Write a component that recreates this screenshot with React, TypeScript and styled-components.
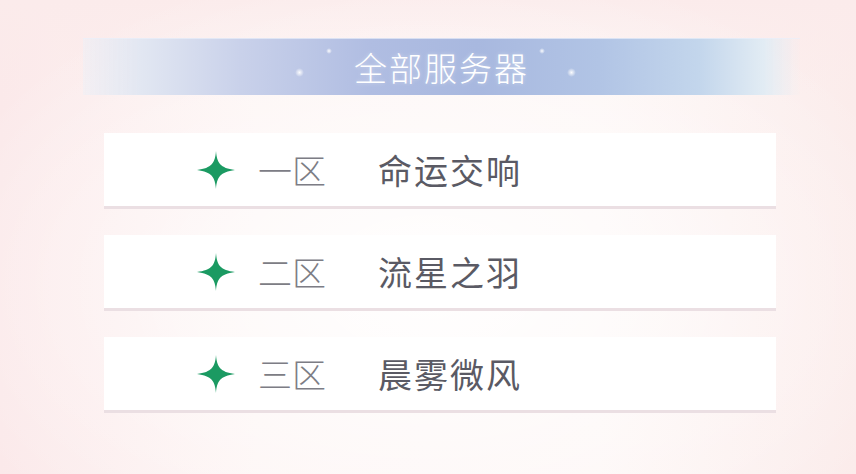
import styled, { createGlobalStyle } from 'styled-components';

const servers = [
  { zone: '一区', name: '命运交响' },
  { zone: '二区', name: '流星之羽' },
  { zone: '三区', name: '晨雾微风' },
];

const GlobalStyle = createGlobalStyle`
  html, body {
    margin: 0;
    padding: 0;
  }
  body {
    font-family: "Noto Sans CJK SC", "Noto Sans", sans-serif;
  }
`;

const Page = styled.div`
  width: 856px;
  height: 474px;
  overflow: hidden;
  box-sizing: border-box;
  padding: 38px 56px 0 83px;
  background:
    radial-gradient(ellipse 60% 70% at 50% 60%, rgba(255, 255, 255, 0.95), rgba(255, 255, 255, 0) 100%),
    linear-gradient(180deg, #fbebeb 0%, rgba(251, 235, 235, 0) 20%),
    linear-gradient(90deg, #fbe9ea 0%, #fdf4f3 30%, #fdf6f5 70%, #fbeceb 100%);
  display: flex;
  flex-direction: column;
`;

const Banner = styled.div`
  position: relative;
  width: 717px;
  height: 56px;
  display: flex;
  align-items: center;
  justify-content: center;
  background: linear-gradient(
    90deg,
    rgba(236, 240, 247, 0.5) 0%,
    #e2e7f2 8%,
    #c9d1ea 22%,
    #b0bde2 40%,
    #a8b8df 55%,
    #b1c4e5 72%,
    #c3d6ec 86%,
    #e2ecf4 95%,
    rgba(240, 244, 248, 0) 100%
  );
  border-top: 1px solid rgba(235, 240, 250, 0.7);
`;

const Title = styled.h1`
  margin: 0;
  font-size: 33px;
  font-weight: 300;
  color: #ffffff;
  letter-spacing: 2px;
  text-shadow: 0 0 4px rgba(255, 255, 255, 0.4);
`;

const Sparkle = styled.span<{ $x: number; $y: number; $s: number }>`
  position: absolute;
  left: ${({ $x }) => $x}px;
  top: ${({ $y }) => $y}px;
  width: ${({ $s }) => $s}px;
  height: ${({ $s }) => $s}px;
  border-radius: 50%;
  background: radial-gradient(circle, rgba(255, 255, 255, 0.95) 0%, rgba(255, 255, 255, 0) 70%);
`;

const List = styled.div`
  margin-top: 38px;
  margin-left: 21px;
  display: flex;
  flex-direction: column;
  gap: 26px;
`;

const Card = styled.div`
  width: 672px;
  height: 76px;
  background: #ffffff;
  border-bottom: 3px solid #ebdfe3;
  display: flex;
  align-items: center;
  padding-left: 92px;
  box-sizing: border-box;
`;

const Star = styled.svg`
  width: 40px;
  height: 40px;
  flex-shrink: 0;
`;

const Zone = styled.span`
  margin-left: 22px;
  font-size: 34px;
  color: #7d7d85;
  font-weight: 300;
  letter-spacing: 0;
`;

const Name = styled.span`
  margin-left: 52px;
  font-size: 34px;
  color: #5a5a64;
  font-weight: 400;
  letter-spacing: 2px;
`;

const StarIcon = () => (
  <Star viewBox="0 0 40 40">
    <path
      d="M20 1 C21 13 24 18 39 20 C24 22 21 27 20 39 C19 27 16 22 1 20 C16 18 19 13 20 1 Z"
      fill="#1b9a62"
    />
  </Star>
);

const App = () => {
  return (
    <>
      <GlobalStyle />
      <Page>
        <Banner>
          <Sparkle $x={212} $y={29} $s={9} />
          <Sparkle $x={243} $y={9} $s={6} />
          <Sparkle $x={456} $y={9} $s={6} />
          <Sparkle $x={484} $y={29} $s={9} />
          <Title>全部服务器</Title>
        </Banner>
        <List>
          {servers.map((s) => (
            <Card key={s.zone}>
              <StarIcon />
              <Zone>{s.zone}</Zone>
              <Name>{s.name}</Name>
            </Card>
          ))}
        </List>
      </Page>
    </>
  );
};

export default App;
